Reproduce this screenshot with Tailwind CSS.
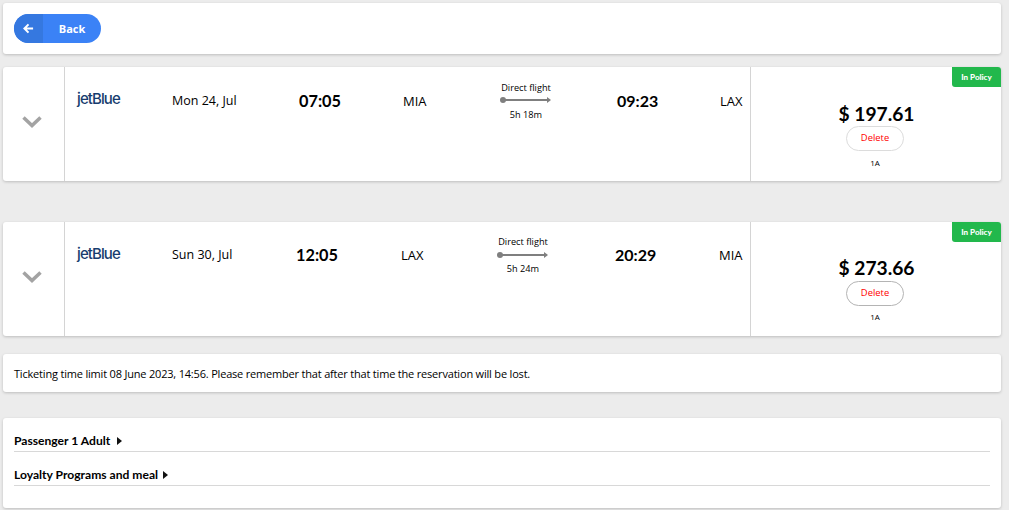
<!DOCTYPE html>
<html lang="en">

<head>
    <meta charset="UTF-8">
    <meta name="viewport" content="width=device-width, initial-scale=1.0">
    <title>Reservation</title>
    <script src="https://cdn.jsdelivr.net/npm/@tailwindcss/browser@4"></script>
</head>

<body class="bg-[#ececec] font-['Open_Sans',sans-serif] text-black w-[1009px] h-[510px] overflow-hidden">
    <div class="pt-[3px] pl-[3px] w-[1001px]">

        <!-- back -->
        <div class="h-[51px] bg-white rounded-[3px] shadow-[0_1px_3px_rgba(0,0,0,0.2)] pl-[11px] pt-[11px]">
            <button class="flex w-[87px] h-[29px] rounded-full overflow-hidden bg-[#3b82f6] text-white">
                <span class="w-[29px] h-full bg-[#3578e0] flex items-center justify-center">
                    <svg width="11" height="11" viewBox="0 0 12 12" fill="none" stroke="#fff" stroke-width="2.200">
                        <path d="M11 6H2M6 1.500 1.500 6 6 10.500" />
                    </svg>
                </span>
                <span class="flex-1 text-center text-[11px] font-bold leading-[29px]">Back</span>
            </button>
        </div>

        <!-- outbound -->
        <div class="relative mt-[13px] h-[114px] bg-white rounded-[3px] shadow-[0_1px_3px_rgba(0,0,0,0.2)] flex">
            <div class="w-[62px] border-r border-[#d4d4d4] flex items-center justify-center pr-[3px] pb-[5px]">
                <svg width="20" height="12" viewBox="0 0 20 12" fill="none" stroke="#a3a3a3" stroke-width="3.500">
                    <path d="M1.500 1.500 10 9.500 18.500 1.500" />
                </svg>
            </div>
            <div class="w-[686px] border-r border-[#d4d4d4] flex items-start pt-[21px] h-full">
                <div class="w-[92px] pl-[12px] font-['Inter',sans-serif] font-medium text-[#173c6e] text-[15px] leading-[22px] tracking-[-0.9px]">jetBlue</div>
                <div class="w-[80px] pl-[15px] whitespace-nowrap text-[12.500px] leading-[26px]">Mon 24, Jul</div>
                <div class="ml-[62px] w-[80px] font-['Lato',sans-serif] font-bold text-[16.300px] leading-[26px]">07:05</div>
                <div class="ml-[24px] w-[85px] text-[13px] leading-[26px]">MIA</div>
                <div class="w-[60px] ml-[8px] flex flex-col items-center -mt-[7px] text-[9.200px]">
                    <span class="whitespace-nowrap leading-[14px]">Direct flight</span>
                    <svg class="mt-[1px]" width="52" height="8" viewBox="0 0 52 8" fill="#7f7f7f">
                        <circle cx="3" cy="4" r="3" />
                        <rect x="3" y="3" width="46" height="2" />
                        <path d="M47 1 51 4 47 7Z" />
                    </svg>
                    <span class="mt-[4px] whitespace-nowrap leading-[14px]">5h 18m</span>
                </div>
                <div class="ml-[61px] w-[95px] font-['Lato',sans-serif] font-bold text-[16px] leading-[26px]">09:23</div>
                <div class="ml-[8px] text-[13px] leading-[26px]">LAX</div>
            </div>
            <div class="flex-1 flex flex-col items-center pt-[34px] pr-[2px]">
                <div class="font-['Lato',sans-serif] font-bold text-[19.200px] leading-[25px] translate-x-[1.500px]">$ 197.61</div>
                <button class="w-[58px] h-[25px] rounded-full border border-[#dcdcdc] text-[#ff0000] text-[9.400px]">Delete</button>
                <div class="mt-[6px] text-[8px] leading-[12px]">1A</div>
            </div>
            <div class="absolute right-0 top-0 w-[49px] h-[20px] bg-[#22b84c] rounded-bl-[3px] rounded-tr-[3px] text-white font-['Lato',sans-serif] font-black text-[8px] leading-[20px] text-center">In Policy</div>
        </div>

        <!-- return -->
        <div class="relative mt-[41px] h-[114px] bg-white rounded-[3px] shadow-[0_1px_3px_rgba(0,0,0,0.2)] flex">
            <div class="w-[62px] border-r border-[#d4d4d4] flex items-center justify-center pr-[3px] pb-[5px]">
                <svg width="20" height="12" viewBox="0 0 20 12" fill="none" stroke="#a3a3a3" stroke-width="3.500">
                    <path d="M1.500 1.500 10 9.500 18.500 1.500" />
                </svg>
            </div>
            <div class="w-[686px] border-r border-[#d4d4d4] flex items-start pt-[20px] h-full">
                <div class="w-[92px] pl-[12px] font-['Inter',sans-serif] font-medium text-[#173c6e] text-[15px] leading-[22px] tracking-[-0.9px] mt-px">jetBlue</div>
                <div class="w-[80px] pl-[15px] whitespace-nowrap text-[12.500px] leading-[26px]">Sun 30, Jul</div>
                <div class="ml-[59px] w-[80px] font-['Lato',sans-serif] font-bold text-[16.300px] leading-[26px]">12:05</div>
                <div class="ml-[25px] w-[85px] text-[13px] leading-[26px]">LAX</div>
                <div class="w-[60px] ml-[7px] flex flex-col items-center -mt-[7px] text-[9.200px]">
                    <span class="whitespace-nowrap leading-[14px]">Direct flight</span>
                    <svg class="mt-[2px]" width="52" height="8" viewBox="0 0 52 8" fill="#7f7f7f">
                        <circle cx="3" cy="4" r="3" />
                        <rect x="3" y="3" width="46" height="2" />
                        <path d="M47 1 51 4 47 7Z" />
                    </svg>
                    <span class="mt-[3px] whitespace-nowrap leading-[14px]">5h 24m</span>
                </div>
                <div class="ml-[62px] w-[95px] font-['Lato',sans-serif] font-bold text-[16px] leading-[26px]">20:29</div>
                <div class="ml-[9px] text-[13px] leading-[26px]">MIA</div>
            </div>
            <div class="flex-1 flex flex-col items-center pt-[33px] pr-[2px]">
                <div class="font-['Lato',sans-serif] font-bold text-[19.200px] leading-[26px] translate-x-[1.500px]">$ 273.66</div>
                <button class="w-[58px] h-[25px] rounded-full border border-[#b4b4b4] text-[#ff0000] text-[9.400px]">Delete</button>
                <div class="mt-[6px] text-[8px] leading-[12px] -translate-y-px">1A</div>
            </div>
            <div class="absolute right-0 top-0 w-[49px] h-[20px] bg-[#22b84c] rounded-bl-[3px] rounded-tr-[3px] text-white font-['Lato',sans-serif] font-black text-[8px] leading-[20px] text-center">In Policy</div>
        </div>

        <!-- time limit -->
        <div class="mt-[18px] h-[38px] bg-white rounded-[3px] shadow-[0_1px_3px_rgba(0,0,0,0.2)] pl-[11px] text-[11px] tracking-[-0.19px] leading-[40px]">Ticketing time limit 08 June 2023, 14:56. Please remember that after that time the reservation will be lost.</div>

        <!-- passenger -->
        <div class="mt-[26px] h-[90px] bg-white rounded-[3px] shadow-[0_1px_3px_rgba(0,0,0,0.2)] px-[11px] pt-[13px] font-['Lato',sans-serif] font-bold text-[12.100px]">
            <div class="h-[21px] border-b border-[#d8d8d8] leading-[20px] flex items-center gap-[7px]">
                <span>Passenger 1 Adult</span>
                <svg width="5" height="8" viewBox="0 0 5 8" fill="#111"><path d="M0 0 5 4 0 8Z" /></svg>
            </div>
            <div class="mt-[13px] h-[21px] border-b border-[#d8d8d8] leading-[20px] flex items-center gap-[5px]">
                <span>Loyalty Programs and meal</span>
                <svg width="5" height="8" viewBox="0 0 5 8" fill="#111"><path d="M0 0 5 4 0 8Z" /></svg>
            </div>
        </div>
    </div>
</body>

</html>
